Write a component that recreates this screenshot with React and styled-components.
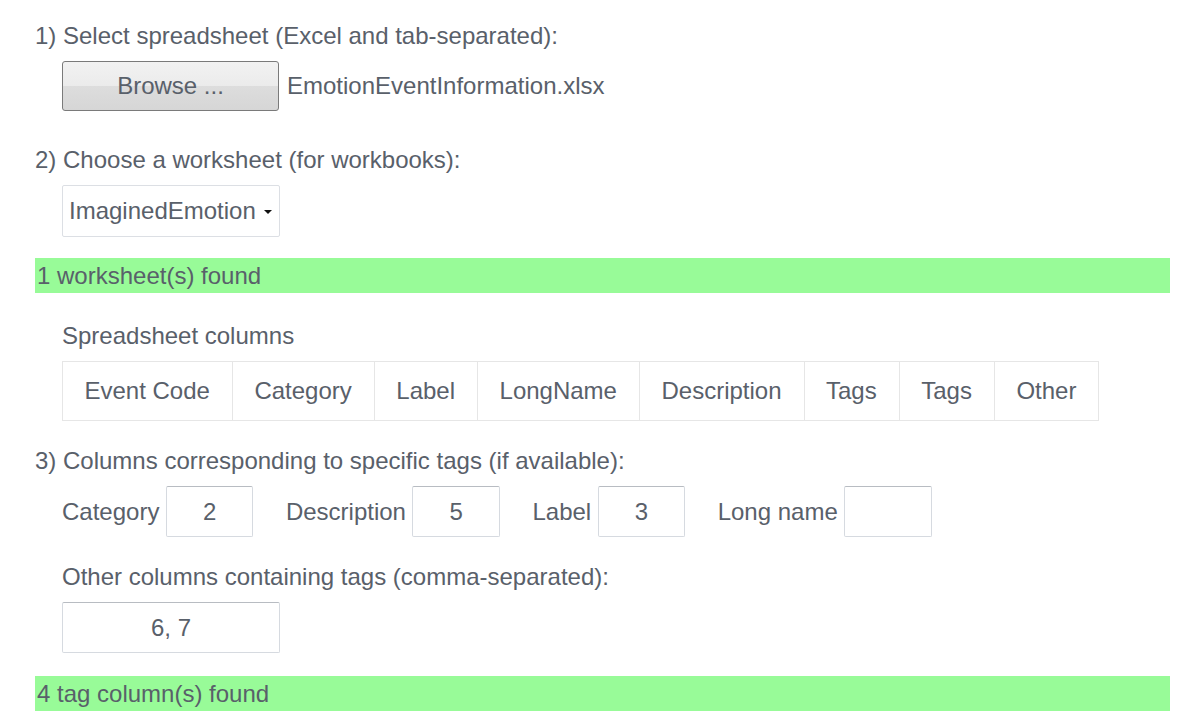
import React from "react";
import styled, { createGlobalStyle } from "styled-components";

const Global = createGlobalStyle`
  html, body { margin: 0; padding: 0; background: #ffffff; }
  body {
    font-family: "Liberation Sans", Arial, sans-serif;
    font-size: 24px;
    color: #59606a;
  }
`;

const Page = styled.div`
  width: 1135px;
  padding: 23px 0 0 35px;
`;

const Heading = styled.div`
  line-height: 26px;
  margin-top: ${(p) => p.$top || 0}px;
`;

const Indented = styled.div`
  margin-left: 27px;
  margin-top: ${(p) => p.$top || 0}px;
`;

const FileRow = styled.div`
  display: flex;
  align-items: center;
  gap: 8px;
  margin: 12px 0 0 27px;
`;

const BrowseButton = styled.button`
  width: 217px;
  height: 50px;
  font: inherit;
  color: #59606a;
  border: 1px solid #7a7a7a;
  border-radius: 3px;
  background: linear-gradient(#f2f2f2 0%, #ebebeb 50%, #dddddd 50%, #d6d6d6 100%);
  padding: 0;
`;

const FileName = styled.span`
  line-height: 26px;
`;

const SelectBox = styled.div`
  box-sizing: border-box;
  width: 218px;
  height: 52px;
  margin: 12px 0 0 27px;
  border: 1px solid #dcdfe4;
  border-radius: 2px;
  display: flex;
  align-items: center;
  padding-left: 6px;
  gap: 8px;
`;

const Caret = styled.span`
  width: 0;
  height: 0;
  border-left: 4px solid transparent;
  border-right: 4px solid transparent;
  border-top: 4px solid #111;
  margin-top: 2px;
`;

const Status = styled.div`
  background: #98fb98;
  height: 35px;
  line-height: 35px;
  padding-left: 2px;
  margin-top: ${(p) => p.$top || 0}px;
`;

const Table = styled.table`
  border-collapse: collapse;
  margin-top: 12px;
`;

const Cell = styled.td`
  border: 1px solid #e6e6e6;
  height: 58px;
  padding: 0 22px 0 21.5px;
  white-space: nowrap;
`;

const FieldRow = styled.div`
  display: flex;
  align-items: center;
  gap: 32.5px;
  margin: 12px 0 0 27px;
`;

const Field = styled.label`
  display: flex;
  align-items: center;
  gap: 6.5px;
`;

const Box = styled.div`
  box-sizing: border-box;
  width: ${(p) => p.$w || 87.5}px;
  height: 51px;
  border: 1px solid #d6dae0;
  border-top-color: #b8bcc2;
  border-radius: 2px;
  display: flex;
  align-items: center;
  justify-content: center;
  margin-top: ${(p) => p.$top || 0}px;
`;

const columns = ["Event Code", "Category", "Label", "LongName", "Description", "Tags", "Tags", "Other"];

const fields = [
  { label: "Category", value: "2" },
  { label: "Description", value: "5" },
  { label: "Label", value: "3" },
  { label: "Long name", value: "" },
];

export default function App() {
  return (
    <>
      <Global />
      <Page>
        <Heading>1) Select spreadsheet (Excel and tab-separated):</Heading>
        <FileRow>
          <BrowseButton>Browse ...</BrowseButton>
          <FileName>EmotionEventInformation.xlsx</FileName>
        </FileRow>
        <Heading $top={36}>2) Choose a worksheet (for workbooks):</Heading>
        <SelectBox>
          ImaginedEmotion
          <Caret />
        </SelectBox>
        <Status $top={21}>1 worksheet(s) found</Status>
        <Indented $top={30}>
          <Heading>Spreadsheet columns</Heading>
          <Table>
            <tbody>
              <tr>
                {columns.map((c, i) => (
                  <Cell key={i}>{c}</Cell>
                ))}
              </tr>
            </tbody>
          </Table>
        </Indented>
        <Heading $top={27}>3) Columns corresponding to specific tags (if available):</Heading>
        <FieldRow>
          {fields.map((f) => (
            <Field key={f.label}>
              {f.label}
              <Box>{f.value}</Box>
            </Field>
          ))}
        </FieldRow>
        <Indented $top={27}>
          <Heading>Other columns containing tags (comma-separated):</Heading>
          <Box $w={218} $top={12}>6, 7</Box>
        </Indented>
        <Status $top={23}>4 tag column(s) found</Status>
      </Page>
    </>
  );
}
